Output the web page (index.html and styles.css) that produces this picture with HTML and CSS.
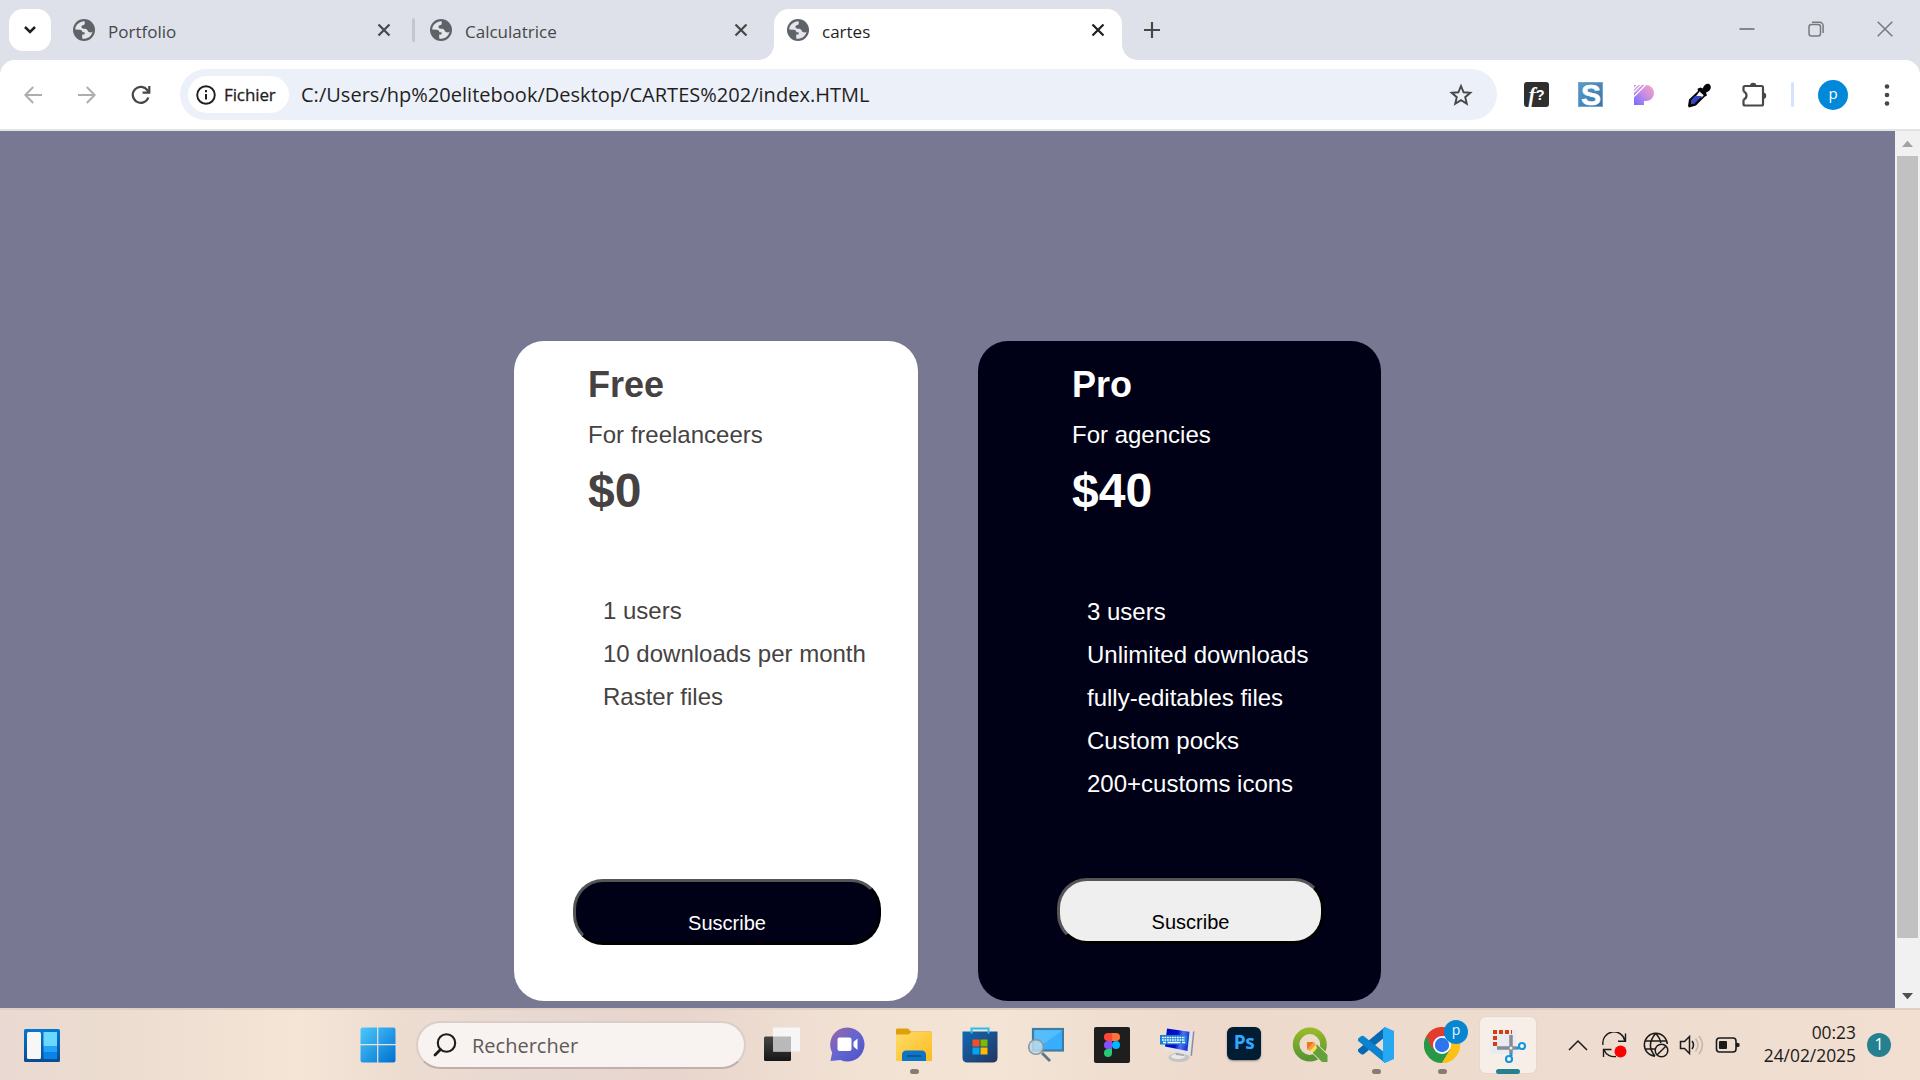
FILE: index.html
```html
<!DOCTYPE html>
<html lang="fr">
<head>
<meta charset="utf-8">
<title>cartes</title>
<link rel="stylesheet" href="styles.css">
</head>
<body>
<svg class="defs" width="0" height="0" aria-hidden="true">
  <symbol id="globe" viewBox="0 0 22 22">
    <circle cx="11" cy="11" r="11" fill="#5f6368"/>
    <path d="M11.5 2.2C7 2 2.400 5.700 2.200 10.500l4.600.2c1.700.2 2.400 1.200 2.600 2.500h2.200v2.400H9.200v3.900c5.600 1.200 9.500-2.600 10.300-6.700-1 .8-2.400.9-3.600.3-1.300-.7-1.200-2.500-2.700-3.100-1.400-.5-3.600.2-4.500-1.200-.8-1.400.5-2.700 1.900-2.700 1.200 0 .8-1.500 1.300-2.300z" fill="#e3e6ea"/>
  </symbol>
  <symbol id="cross" viewBox="0 0 14 14"><path d="M1.500 1.500l11 11M12.500 1.500l-11 11" fill="none" stroke="currentColor" stroke-width="2.200"/></symbol>
  <linearGradient id="gBlue" x1="0" y1="0" x2="1" y2="1"><stop offset="0" stop-color="#4cc9fb"/><stop offset="1" stop-color="#0070d0"/></linearGradient>
  <linearGradient id="gFrame" x1="0" y1="0" x2="0" y2="1"><stop offset="0" stop-color="#0478d4"/><stop offset="1" stop-color="#0b4a91"/></linearGradient>
  <linearGradient id="gTeams" x1="0" y1="0" x2="1" y2="1"><stop offset="0" stop-color="#a064a8"/><stop offset=".5" stop-color="#6365d0"/><stop offset="1" stop-color="#4d52c8"/></linearGradient>
  <linearGradient id="gFolder" x1="0" y1="0" x2="1" y2="1"><stop offset="0" stop-color="#ffdc6a"/><stop offset="1" stop-color="#fbbb1c"/></linearGradient>
  <linearGradient id="gStore" x1="0" y1="0" x2="1" y2="1"><stop offset="0" stop-color="#1068b5"/><stop offset="1" stop-color="#23365f"/></linearGradient>
  <linearGradient id="gScreen" x1="0" y1="0" x2="1" y2="1"><stop offset="0" stop-color="#5abffa"/><stop offset=".5" stop-color="#52bcff"/><stop offset=".55" stop-color="#38adfb"/><stop offset="1" stop-color="#35b0ff"/></linearGradient>
  <linearGradient id="gP" x1="1" y1="0" x2="0" y2="1"><stop offset="0" stop-color="#ffa3bd"/><stop offset=".5" stop-color="#c48ce8"/><stop offset="1" stop-color="#706cff"/></linearGradient>
  <linearGradient id="gMonitor" x1="0" y1="0" x2="1" y2=".2"><stop offset="0" stop-color="#0008a8"/><stop offset=".55" stop-color="#0712cf"/><stop offset=".75" stop-color="#5a70ee"/><stop offset="1" stop-color="#2036d8"/></linearGradient>
  <linearGradient id="gDark" x1="0" y1="0" x2="0" y2="1"><stop offset="0" stop-color="#464646"/><stop offset="1" stop-color="#161616"/></linearGradient>
  <linearGradient id="gQ" x1="0" y1="0" x2="0" y2="1"><stop offset="0" stop-color="#97b82a"/><stop offset="1" stop-color="#589632"/></linearGradient>
</svg>

<div class="screen">
  <header class="tabstrip">
    <div class="tab-search"><svg width="14" height="10" viewBox="0 0 14 10"><path d="M2 2l5 5 5-5" fill="none" stroke="#1f1f1f" stroke-width="2.500"/></svg></div>
    <div class="tab tab-first">
      <svg class="fav"><use href="#globe"/></svg><span class="tab-title">Portfolio</span><svg class="tab-x"><use href="#cross"/></svg>
    </div>
    <i class="tab-sep"></i>
    <div class="tab tab-second">
      <svg class="fav"><use href="#globe"/></svg><span class="tab-title">Calculatrice</span><svg class="tab-x"><use href="#cross"/></svg>
    </div>
    <div class="tab tab-active">
      <svg class="fav"><use href="#globe"/></svg><span class="tab-title">cartes</span><svg class="tab-x"><use href="#cross"/></svg>
    </div>
    <svg class="new-tab" width="16" height="16" viewBox="0 0 16 16"><path d="M8 0v16M0 8h16" stroke="#474747" stroke-width="2.200"/></svg>
    <div class="window-buttons">
      <svg width="16" height="16" viewBox="0 0 16 16"><path d="M.5 8h15" stroke="#858688" stroke-width="2"/></svg>
      <svg width="16" height="16" viewBox="0 0 16 16" fill="none" stroke="#77797c" stroke-width="1.500"><rect x="1" y="3.500" width="11.500" height="11.500" rx="2.500"/><path d="M4 1.200h7.500c2 0 3.600 1.600 3.600 3.600V12"/></svg>
      <svg width="16" height="16" viewBox="0 0 16 16"><path d="M.7.700l14.600 14.600M15.300.700L.7 15.300" stroke="#77797c" stroke-width="1.500"/></svg>
    </div>
  </header>

  <nav class="toolbar">
    <div class="nav-buttons">
      <svg width="18" height="18" viewBox="0 0 18 18" fill="none" stroke="#adadad" stroke-width="2"><path d="M18 9H1.500M9.200 1L1.300 9l7.900 8"/></svg>
      <svg width="18" height="18" viewBox="0 0 18 18" fill="none" stroke="#adadad" stroke-width="2"><path d="M0 9h16.500M8.800 1l7.900 8-7.900 8"/></svg>
      <svg class="reload" width="20" height="20" viewBox="0 0 20 20" fill="none" stroke="#474747" stroke-width="2.200"><path d="M17.300 12.500A8 8 0 1 1 16.500 5.500L18 7.300"/><path d="M18.300 1v6.700h-6.700"/></svg>
    </div>
    <div class="omnibox">
      <div class="chip">
        <svg width="20" height="20" viewBox="0 0 20 20"><circle cx="10" cy="10" r="8.800" fill="none" stroke="#1f1f1f" stroke-width="1.900"/><path d="M10 9v5.500M10 5v2.200" stroke="#1f1f1f" stroke-width="2"/></svg>
        <span>Fichier</span>
      </div>
      <span class="url">C:/Users/hp%20elitebook/Desktop/CARTES%202/index.HTML</span>
      <svg class="star" width="24" height="24" viewBox="0 0 24 24"><path d="M12 3l2.600 6.300 6.700.5-5.100 4.400 1.600 6.600L12 17.200l-5.800 3.600 1.600-6.600-5.100-4.400 6.700-.5z" fill="none" stroke="#474747" stroke-width="1.900"/></svg>
    </div>
    <div class="extensions">
      <div class="ext-f"><i>f</i><b>?</b></div>
      <div class="ext-s">S</div>
      <svg width="22" height="22" viewBox="0 0 22 22"><path d="M1 21V9L9 1h4a8 8 0 0 1 0 16h-2v4z" fill="url(#gP)"/><path d="M1 1h9L1 10z" fill="#d99be6"/><path d="M0 5.500L5.500 0M0 9L9 0M1 12.500L13 .5" stroke="#fff" stroke-width="1.200"/></svg>
      <svg width="24" height="26" viewBox="0 0 24 26"><path d="M13.500 5.500l2.300 1C17 2 22 0 23.500 3.800c1.200 3-1.700 6.200-4.500 6.700l1 3-2.300 1.200L9 23.500 2 25.500 1 24l1-6.500 9-8.500-.5-2.300z" fill="#060609"/><path d="M12.500 9.500l4.200 3.700-1.700 2H8.200z" fill="#f4f5ff"/><path d="M8 14h7L7 22H4v-3.800z" fill="#3445c2"/></svg>
      <svg width="26" height="26" viewBox="0 0 26 26"><rect x="2.500" y="4" width="19.500" height="19.500" rx="1.500" fill="none" stroke="#474747" stroke-width="2.200"/><path d="M0 9.500h4v8H0z" fill="#fff"/><path d="M2.500 9.500q3 1 3 4t-3 4" fill="none" stroke="#474747" stroke-width="2.200"/><path d="M9 4a3.200 3.200 0 0 1 6.400 0zM22 10.500a3.200 3.200 0 0 1 0 6.400z" fill="#474747"/></svg>
      <i class="ext-sep"></i>
      <div class="avatar">p</div>
      <svg class="dots" width="6" height="24" viewBox="0 0 6 24" fill="#474747"><circle cx="3" cy="3.500" r="2.300"/><circle cx="3" cy="12" r="2.300"/><circle cx="3" cy="20.500" r="2.300"/></svg>
    </div>
  </nav>

  <div class="viewport">
    <main class="page">
      <section class="card card-free">
        <h2>Free</h2>
        <p>For freelanceers</p>
        <h1>$0</h1>
        <ul><li>1 users</li><li>10 downloads per month</li><li>Raster files</li></ul>
        <button>Suscribe</button>
      </section>
      <section class="card card-pro">
        <h2>Pro</h2>
        <p>For agencies</p>
        <h1>$40</h1>
        <ul><li>3 users</li><li>Unlimited downloads</li><li>fully-editables files</li><li>Custom pocks</li><li>200+customs icons</li></ul>
        <button>Suscribe</button>
      </section>
    </main>
    <div class="scrollbar">
      <svg width="25" height="25" viewBox="0 0 25 25"><path d="M7 16h11l-5.500-6.300z" fill="#a3a3a3"/></svg>
      <div class="thumb"></div>
      <svg width="25" height="25" viewBox="0 0 25 25"><path d="M7 10h11l-5.500 6.200z" fill="#505050"/></svg>
    </div>
  </div>

  <footer class="taskbar">
    <svg class="widgets" width="36" height="33" viewBox="0 0 36 33"><rect width="36" height="33" rx="1.500" fill="url(#gFrame)"/><rect x="3" y="3" width="14" height="27" rx="1.500" fill="#f7f7f8"/><path d="M19.500 3H33v14.500H19.500z" fill="#6ad9ff"/><path d="M19.500 17.500H33v6H19.500z" fill="#1ea5fb"/><path d="M19.500 23.500H33V30H19.500z" fill="#0883e8"/></svg>
    <svg class="start" width="36" height="36" viewBox="0 0 36 36"><rect x=".5" y=".5" width="35" height="35" rx="2" fill="url(#gBlue)"/><path d="M17.700 0v36M0 17.700h36" stroke="#eee3dc" stroke-width="1.200"/></svg>
    <div class="search">
      <svg width="24" height="24" viewBox="0 0 24 24" fill="none" stroke="#1c1c1c" stroke-width="2.100"><circle cx="13.500" cy="10" r="8.700"/><path d="M7.500 16.500L2 22" stroke-width="2.800" stroke-linecap="round"/></svg>
      <span>Rechercher</span>
    </div>
    <div class="apps">
      <div class="app"><svg viewBox="0 0 36 36"><rect x="0" y="9.500" width="27" height="24.500" rx="1.500" fill="url(#gDark)"/><rect x="9" y=".5" width="27" height="24" rx="1" fill="#f6f6f7"/><path d="M9 9.500h18v15H9z" fill="#b9b9b9"/></svg></div>
      <div class="app"><svg viewBox="0 0 36 36"><path d="M17.500.5a17 17 0 1 1-7 32.500L.5 34l1.700-8.500A17 17 0 0 1 17.500.500z" fill="url(#gTeams)"/><rect x="7.500" y="10.500" width="14" height="13.500" rx="2" fill="#fff"/><path d="M23.500 15l4-3.500v11.500l-4-3.500z" fill="#fff"/></svg></div>
      <div class="app"><svg viewBox="0 0 36 36"><path d="M0 3c0-1 .7-1.500 1.500-1.500H12l3 3h19.500c1 0 1.500.5 1.500 1.500v5H0z" fill="#dfa00b"/><path d="M0 7.500h12.500l3-2.500h19c1 0 1.500.5 1.500 1.500V34H0z" fill="url(#gFolder)"/><path d="M6 34v-6q0-4.500 4.500-4.500h15Q30 23.500 30 28v6z" fill="#0f74c4"/><path d="M11 29h14" stroke="#064f91" stroke-width="1.500"/></svg><i class="dot"></i></div>
      <div class="app"><svg viewBox="0 0 36 36"><path d="M.5 4.500h35v26q0 5-5 5h-25q-5 0-5-5z" fill="url(#gStore)"/><path d="M9.500 6.500v-5h17v5" fill="none" stroke="#29bdf1" stroke-width="2"/><path d="M10.500 12.500h7v7h-7z" fill="#f25022"/><path d="M18.500 12.500h7v7h-7z" fill="#7fba00"/><path d="M10.500 20.500h7v7h-7z" fill="#00a4ef"/><path d="M18.500 20.500h7v7h-7z" fill="#ffb900"/></svg></div>
      <div class="app"><svg viewBox="0 0 36 36"><rect x="5" y="2" width="30" height="21.500" fill="url(#gScreen)" stroke="#3e7ca4" stroke-width="2.200"/><path d="M14 26l8 8" stroke="#617783" stroke-width="2.800"/><circle cx="8" cy="20" r="7.300" fill="#bddaea" fill-opacity=".85" stroke="#8798a2" stroke-width="1.500"/></svg></div>
      <div class="app"><svg viewBox="0 0 36 36"><rect width="36" height="36" rx="2" fill="#1e1e1e"/><path d="M18 6h-4a4 4 0 0 0 0 8h4z" fill="#ff4438"/><path d="M18 6h4a4 4 0 0 1 0 8h-4z" fill="#ff7237"/><path d="M18 14h-4a4 4 0 0 0 0 8h4z" fill="#874fff"/><circle cx="22" cy="18" r="4" fill="#00b6ff"/><path d="M18 22h-4a4 4 0 1 0 4 4z" fill="#24cb71"/></svg></div>
      <div class="app"><svg viewBox="0 0 36 36"><ellipse cx="19" cy="30.500" rx="10.500" ry="4.500" fill="#c4c4c6"/><ellipse cx="18" cy="29.500" rx="7" ry="2.500" fill="#e9e9ea"/><path d="M15 22l9 2v5l-8-1z" fill="#a9a9a9"/><path d="M6 .5l28.500 4L32 29 3.500 23z" fill="#e2e3e8"/><path d="M34.500 4.500L32 29l-1.500-.4L33 4.300z" fill="#8c8f99"/><path d="M7 1.500l22.500 3.300L27.500 24 5 19.500z" fill="url(#gMonitor)"/><rect x="0" y="8" width="27" height="9.500" fill="#1781d4"/><path d="M2 10.500h23M2 13h23" stroke="#fff" stroke-width="1.500" stroke-dasharray="1.800 .7"/><path d="M3 15.500h3M7.500 15.500h13M22 15.500h3" stroke="#fff" stroke-width="1.300"/></svg></div>
      <div class="app"><div class="ps">Ps</div></div>
      <div class="app"><svg viewBox="0 0 36 36"><circle cx="17.800" cy="17.500" r="13.700" fill="none" stroke="url(#gQ)" stroke-width="6.600"/><path d="M21 19l3-3.500L36 27v8.500h-7L20 26z" fill="#e9dccd"/><path d="M21.500 22l3.500-4.500L35.500 28v7h-5.500L21 26z" fill="#64a13a"/><path d="M15 15h7l-6 7.500h-1z" fill="#ee7913"/><path d="M22 15l2 3-6 6-2.500-2z" fill="#f6a04d"/><path d="M24 18l1 3-3 4-4-1z" fill="#f7e34a"/></svg></div>
      <div class="app"><svg viewBox="0 0 36 36"><path d="M27 0v10L6 27q-1.500 1-3 0l-2.500-2q-1.500-1.500 0-3z" fill="#0869b2"/><path d="M27 36V26L6 9.200q-1.500-1-3 0L.5 11.300q-1.500 1.500 0 3z" fill="#0b83ce"/><path d="M27 0l9 4v28l-9 4-2-1.200V1.200z" fill="#26a9f2"/></svg><i class="dot"></i></div>
      <div class="app"><svg viewBox="0 0 36 36"><circle cx="18" cy="18" r="18" fill="#f9bd16"/><path d="M18 18L2.400 9A18 18 0 0 0 18 36l8-13.500z" fill="#279847"/><path d="M18 18L8 21.500 2.400 9a18 18 0 0 1 31.200 0z" fill="#e23c30"/><path d="M18 9h15.600A18 18 0 0 1 18 36l8-13z" fill="#fbc116"/><circle cx="18" cy="18" r="9" fill="#fff"/><circle cx="18" cy="18" r="7.200" fill="#2c75ec"/></svg><span class="badge">p</span><i class="dot"></i></div>
      <div class="app app-open"><svg viewBox="0 0 36 36"><rect x="0" y="3" width="26" height="24" rx="2" fill="#e9ebf0"/><path d="M5 19V5h17" fill="none" stroke="#da3b0b" stroke-width="4" stroke-dasharray="4 2"/><path d="M21 8v18M7 21h19" stroke="#858b93" stroke-width="3.500"/><circle cx="21" cy="21" r="1.500" fill="#eee"/><path d="M21 26v3M26 21h3" stroke="#1797dd" stroke-width="3"/><circle cx="19" cy="32" r="3" fill="#fff" stroke="#1797dd" stroke-width="2.200"/><circle cx="32" cy="19" r="3" fill="#fff" stroke="#1797dd" stroke-width="2.200"/></svg><i class="dot dot-wide"></i></div>
    </div>
    <div class="tray">
      <svg width="20" height="12" viewBox="0 0 20 12"><path d="M1 11l9-9 9 9" fill="none" stroke="#1b1b1b" stroke-width="1.500"/></svg>
      <svg class="sync" width="26" height="26" viewBox="0 0 26 26" fill="none" stroke="#1b1b1b" stroke-width="1.400"><path d="M2 13A11 11 0 0 1 24 9M24.500 1.500v7.700H17"/><path d="M15 24.500A11 11 0 0 1 3 18M2.500 25v-7.500h8"/><circle cx="19.500" cy="19.500" r="6" fill="#f00" stroke="none"/></svg>
      <svg class="net" width="26" height="26" viewBox="0 0 26 26" fill="none" stroke="#1b1b1b" stroke-width="1.500"><path d="M12 24.300A11.500 11.500 0 1 1 24.300 12M2 9h22M2 17h10M12 24c-6-7-6-15 .7-22.500C16 5 17.500 8 17.700 11"/><circle cx="18.500" cy="18.500" r="6.300"/><path d="M14.200 22.800l8.600-8.600"/></svg>
      <svg class="sound" width="25" height="22" viewBox="0 0 25 22" fill="none" stroke="#1b1b1b" stroke-width="1.500"><path d="M1.500 7.500h4l5-5v17l-5-5h-4z"/><path d="M13 7q3 4 0 8"/><path d="M16.500 4.500q5 6.500 0 13M20 2q7 9 0 18" stroke="#c4b5aa"/></svg>
      <svg class="battery" width="25" height="18" viewBox="0 0 25 18"><rect x="1.500" y="2" width="19.500" height="14" rx="3" fill="none" stroke="#1b1b1b" stroke-width="1.600"/><rect x="4" y="5" width="8" height="8" rx="1" fill="#1b1b1b"/><path d="M21 6.500l3.500 1v3l-3.500 1z" fill="#1b1b1b"/></svg>
      <div class="clock"><span>00:23</span><span>24/02/2025</span></div>
      <div class="notif">1</div>
    </div>
  </footer>
</div>
</body>
</html>
```
FILE: styles.css
```css
* { box-sizing: border-box; }
body { margin: 0; font-family: "Open Sans", "Noto Sans", sans-serif; overflow: hidden; }
.defs { position: absolute; }
svg { flex: none; display: block; }
.screen { width: 1920px; height: 1080px; display: flex; flex-direction: column; background: #dee1e9; }

/* tab strip */
.tabstrip { height: 60px; flex: none; display: flex; align-items: flex-start; padding: 9px 0 0 9px; }
.tab-search { width: 42px; height: 42px; border-radius: 14px; background: #fff; display: flex; align-items: center; justify-content: center; }
.tab { height: 51px; display: flex; align-items: center; padding-bottom: 9px; color: #474747; }
.tab-first { margin-left: 9px; width: 352px; padding-left: 13px; padding-right: 21px; }
.tab-sep { width: 3px; height: 24px; margin-top: 9px; background: #c6c7ca; border-radius: 2px; }
.tab-second { width: 360px; padding-left: 15px; padding-right: 27px; }
.tab-active { position: relative; width: 348px; margin-left: -1px; padding-left: 13px; padding-right: 17px; background: #fff; border-radius: 15px 15px 0 0; color: #1f1f1f; }
.tab-active::before, .tab-active::after { content: ""; position: absolute; bottom: 0; width: 15px; height: 15px; }
.tab-active::before { left: -15px; background: radial-gradient(circle at 0 0, transparent 14.500px, #fff 15px); }
.tab-active::after { right: -15px; background: radial-gradient(circle at 100% 0, transparent 14.500px, #fff 15px); }
.fav { width: 22px; height: 22px; }
.tab-title { flex: 1; margin-left: 13px; margin-top: 3px; font-size: 17px; white-space: nowrap; }
.tab-x { width: 14px; height: 14px; }
.new-tab { margin: 13px 0 0 22px; }
.window-buttons { margin: 12px 27px 0 auto; display: flex; gap: 53px; }

/* toolbar */
.toolbar { height: 71px; flex: none; background: #fff; border-radius: 15px 15px 0 0; display: flex; align-items: center; padding-bottom: 2px; box-shadow: inset 0 -2px 0 #e3e3e6; }
.nav-buttons { display: flex; gap: 36px; align-items: center; margin-left: 24px; width: 156px; }
.reload { margin-left: -1px; }
.omnibox { width: 1317px; height: 51px; border-radius: 26px; background: #ecf0f9; display: flex; align-items: center; padding: 0 24px 0 8px; }
.chip { width: 101px; height: 37px; border-radius: 19px; background: #fff; display: flex; align-items: center; padding-left: 8px; gap: 8px; font-size: 17px; letter-spacing: -.1px; font-weight: 500; color: #1f1f1f; -webkit-text-stroke: .3px #1f1f1f; }
.url { margin-left: 12px; font-size: 20px; letter-spacing: .02px; color: #1f1f1f; flex: 1; white-space: nowrap; }
.extensions { display: flex; align-items: center; margin-left: 27px; }
.extensions > * { flex: none; }
.ext-f { width: 25px; height: 25px; border-radius: 3px; background: #2f2f2f; color: #fff; display: flex; align-items: center; justify-content: center; font: bold 15px/25px "Liberation Sans", sans-serif; margin-right: 29px; }
.ext-f i { font: italic bold 21px/22px "Liberation Serif", serif; }
.ext-s { width: 25px; height: 25px; margin-right: 30px; border: 1px solid #7ba3c5; background: linear-gradient(135deg, #5a9aca, #3576ab); color: #fff; font: bold 30px/24px "Liberation Sans", sans-serif; text-align: center; text-indent: 1px; -webkit-text-stroke: .6px #fff; overflow: hidden; }
.extensions svg:nth-of-type(1) { margin-right: 32px; }
.extensions svg:nth-of-type(2) { margin-right: 30px; }
.extensions svg:nth-of-type(3) { margin-right: 24px; }
.ext-sep { width: 3px; height: 25px; background: #d3e3fd; border-radius: 2px; }
.avatar { width: 30px; height: 30px; border-radius: 50%; background: #0288d8; color: #fff; font-size: 15px; line-height: 27px; text-align: center; margin: 0 36px 0 24px; }

/* page */
.viewport { height: 877px; flex: none; display: flex; }
.page { width: 1895px; display: flex; gap: 60px; align-items: flex-start; padding: 210px 0 0 514px; background: #797893; font-family: "Liberation Sans", Arial, sans-serif; }
.card { height: 660px; border-radius: 30px; display: flex; flex-direction: column; align-items: flex-start; padding-top: 22px; }
.card h2 { margin: 0; font-size: 36px; line-height: 43px; }
.card p { margin: 15px 0 14px; font-size: 24px; line-height: 28px; }
.card h1 { margin: 0; font-size: 48px; line-height: 56px; }
.card ul { list-style: none; margin: 70px 0 0 15px; padding: 0; font-size: 24px; line-height: 43px; white-space: nowrap; }
.card button { margin: auto 0 56px -15px; width: 308px; height: 66px; padding: 29px 0 7px; border: 3px solid; border-color: #555 #000 #000 #555; border-radius: 30px; font: 20px/24px "Liberation Sans", Arial, sans-serif; }
.card-free { width: 404px; padding-left: 74px; background: #fff; color: #464242; }
.card-free button { background: #000117; color: #fff; }
.card-pro { width: 403px; padding-left: 94px; background: #000117; color: #fff; }
.card-pro ul { margin-top: 71px; }
.card-pro button { width: 267px; margin-bottom: 57px; background: #efefef; color: #000; }
.scrollbar { width: 25px; background: #f1f1f1; display: flex; flex-direction: column; align-items: center; }
.thumb { width: 21px; height: 782px; background: #c1c1c1; margin-bottom: 45px; }

/* taskbar */
.taskbar { height: 72px; flex: none; display: flex; align-items: center; border-top: 2px solid #dfd0c6; background: linear-gradient(90deg, #ead9d2 0, #ebdccf 110px, #f5e5d7 300px, #ecdcd0 410px, #e7d8d2 540px, #e8d5cd 680px, #f2e2d3 860px, #f3e4d5 1000px, #eddacd 1210px, #eddccf 1600px, #f2dfd1 1920px); }
.widgets { margin-left: 24px; }
.start { margin-left: 300px; }
.search { width: 330px; height: 48px; margin-left: 20px; border-radius: 24px; border: 2px solid #dbcdc7; border-bottom-color: #bfb1aa; background: #f8f3f0; display: flex; align-items: center; padding-left: 15px; gap: 15px; font-size: 20px; color: #5d5a58; }
.apps { display: flex; margin-left: 3px; height: 70px; align-items: center; }
.app { position: relative; width: 66px; height: 56px; display: flex; align-items: center; justify-content: center; }
.app svg { width: 36px; height: 36px; }
.dot { position: absolute; left: 29px; bottom: -1px; width: 9px; height: 5px; border-radius: 3px; background: #877c75; }
.dot-wide { left: 16px; width: 24px; background: #25818f; }
.app-open { width: 56px; margin-left: 5px; border-radius: 6px; background: #f7eee8; box-shadow: 0 0 0 1px #e5d7cd; }
.ps { width: 34px; height: 33px; border-radius: 6px; background: #001d34; color: #31a8ff; font-size: 19px; font-weight: 700; letter-spacing: -.5px; line-height: 30px; text-align: center; margin-bottom: 3px; box-shadow: 0 1px 2px #0006; }
.badge { position: absolute; left: 35px; top: 3px; width: 24px; height: 24px; border-radius: 50%; background: #0686d0; color: #e9f5fc; font-size: 14px; line-height: 20px; text-align: center; }
.tray { display: flex; align-items: center; margin-left: 32px; }
.sync { margin-left: 13px; }
.net { margin-left: 16px; }
.sound { margin-left: 10px; }
.battery { margin-left: 11px; }
.clock { display: flex; flex-direction: column; align-items: flex-end; width: 101px; margin-left: 15px; margin-bottom: 2px; font-size: 17.400px; line-height: 23px; color: #1b1b1b; }
.notif { width: 24px; height: 24px; border-radius: 50%; background: #25818f; color: #fff; font-size: 16px; line-height: 23px; text-align: center; margin-left: 11px; margin-bottom: 1px; }
```
